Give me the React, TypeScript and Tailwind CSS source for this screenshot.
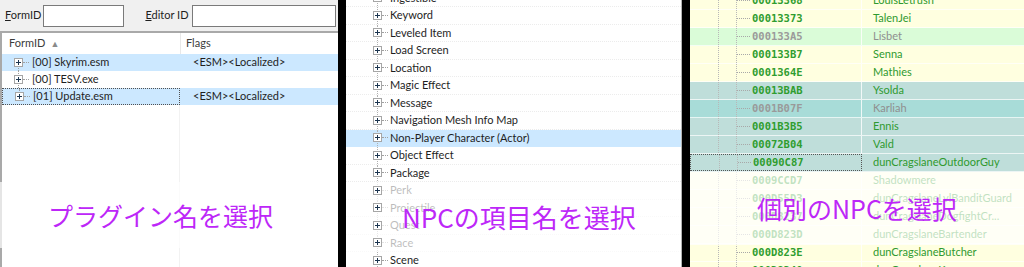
import React from "react";

// Windows-like tree expander box
function Expander() {
  return (
    <svg width="9" height="9" viewBox="0 0 9 9" className="relative z-10 shrink-0">
      <rect x="0.5" y="0.5" width="8" height="8" fill="white" stroke="#a6a6a6" />
      <path d="M2 4.5h5M4.5 2v5" stroke="#1c3550" />
    </svg>
  );
}

const pluginRows = [
  { name: "[00] Skyrim.esm", flags: "<ESM><Localized>", selected: true },
  { name: "[00] TESV.exe", flags: "" },
  { name: "[01] Update.esm", flags: "<ESM><Localized>", selected: true, focus: true },
];

const recordTypes = [
  "Ingestible",
  "Keyword",
  "Leveled Item",
  "Load Screen",
  "Location",
  "Magic Effect",
  "Message",
  "Navigation Mesh Info Map",
  "Non-Player Character (Actor)",
  "Object Effect",
  "Package",
  "Perk",
  "Projectile",
  "Quest",
  "Race",
  "Scene",
];

type Npc = { id: string; name: string; bg: string; gray?: boolean; focus?: boolean };

const npcs: Npc[] = [
  { id: "00013368", name: "LouisLetrush", bg: "bg-[#ffffe0]" },
  { id: "00013373", name: "TalenJei", bg: "bg-[#ffffe0]" },
  { id: "000133A5", name: "Lisbet", bg: "bg-[#dafcd8]", gray: true },
  { id: "000133B7", name: "Senna", bg: "bg-[#ffffe0]" },
  { id: "0001364E", name: "Mathies", bg: "bg-[#ffffe0]" },
  { id: "00013BAB", name: "Ysolda", bg: "bg-[#bfdeda]" },
  { id: "0001B07F", name: "Karliah", bg: "bg-[#a8dcd8]", gray: true },
  { id: "0001B3B5", name: "Ennis", bg: "bg-[#bfdeda]" },
  { id: "00072B04", name: "Vald", bg: "bg-[#bfdeda]" },
  { id: "00090C87", name: "dunCragslaneOutdoorGuy", bg: "bg-[#bfdeda]", focus: true },
  { id: "0009CCD7", name: "Shadowmere", bg: "bg-[#ffffe0]" },
  { id: "000D55D3", name: "dunCragslaneLvlBanditGuard", bg: "bg-[#ffffe0]" },
  { id: "000D8237", name: "dunCragslaneDogfightCr...", bg: "bg-[#ffffe0]" },
  { id: "000D823D", name: "dunCragslaneBartender", bg: "bg-[#ffffe0]" },
  { id: "000D823E", name: "dunCragslaneButcher", bg: "bg-[#ffffe0]" },
  { id: "000D8240", name: "dunCragslaneKeeper", bg: "bg-[#ffffe0]" },
];

function PluginPanel() {
  return (
    <div className="relative flex h-full w-[338px] shrink-0 flex-col overflow-hidden bg-white text-[11px] text-[#1e1e1e]">
      {/* filter bar */}
      <div className="flex h-[31px] shrink-0 items-center bg-[#f0f0f0] pl-[5px] text-[#1e1e1e]">
        <span>
          <span className="underline">F</span>ormID
        </span>
        <div className="ml-[2px] h-[22px] w-[81px] border border-[#7a7a7a] bg-white" />
        <span className="ml-[21px]">
          <span className="underline">E</span>ditor ID
        </span>
        <div className="ml-[3px] h-[22px] flex-1 border border-[#7a7a7a] bg-white" />
        <div className="w-[2px]" />
      </div>

      {/* list */}
      <div className="flex flex-1 flex-col border-l-2 border-t-2 border-[#a9a9a9]">
        <div className="flex h-[21px] shrink-0 items-center text-[#3c3c3c]">
          <div className="flex h-full w-[178px] items-center pl-[7px]">
            FormID
            <span className="ml-[5px] text-[9px] text-[#8a8a8a]">▲</span>
          </div>
          <div className="flex h-full flex-1 items-center border-l border-[#e8e8e8] pl-[5px]">Flags</div>
        </div>

        {pluginRows.map((row, i) => (
          <div key={row.name} className={`flex h-[17px] shrink-0 items-center ${row.selected ? "bg-[#cce8ff]" : ""}`}>
            <div
              className={`relative flex h-full w-[178px] items-center pl-[12px] ${
                row.focus ? "border border-dotted border-[#505050]" : ""
              }`}
            >
              <div
                className={`absolute left-[16px] border-l border-dotted border-[#a0a0a0] ${
                  i === 0 ? "top-1/2 bottom-0" : i === pluginRows.length - 1 ? "top-0 bottom-1/2" : "inset-y-0"
                }`}
              />
              <Expander />
              <div className="w-[6px] border-t border-dotted border-[#a0a0a0]" />
              <span className="ml-[3px]">{row.name}</span>
            </div>
            <div className="pl-[13px]">{row.flags}</div>
          </div>
        ))}

        <div className="flex flex-1">
          <div className="w-[178px] border-r border-[#f2f2f2]" />
        </div>
      </div>

      <div className="absolute inset-x-0 top-[182px] flex h-[66px] items-center bg-white/70 pl-[48px]">
        <span className="font-['Noto_Sans_CJK_JP',sans-serif] text-[25px] leading-none text-[#bd27f8]">
          プラグイン名を選択
        </span>
      </div>
    </div>
  );
}

function RecordPanel() {
  return (
    <div className="relative h-full w-[336px] shrink-0 overflow-hidden border-r border-[#b4b4b4] bg-white text-[11px] text-[#1e1e1e]">
      <div className="-mt-[10.5px] flex flex-col">
        {recordTypes.map((name) => (
          <div
            key={name}
            className={`flex h-[17.5px] shrink-0 items-center border-b border-dotted ${
              name.startsWith("Non-Player") ? "border-[#cce8ff] bg-[#cce8ff]" : "border-[#ececec]"
            }`}
          >
            <div className="relative flex h-full items-center pl-[27px]">
              <div className="absolute inset-y-0 left-[31px] border-l border-dotted border-[#b0b0b0]" />
              <Expander />
              <div className="w-[6px] border-t border-dotted border-[#a0a0a0]" />
              <span className="ml-[2px]">{name}</span>
            </div>
          </div>
        ))}
      </div>

      <div className="absolute inset-x-0 top-[182px] flex h-[70px] items-center bg-white/70 pl-[56px]">
        <span className="font-['Noto_Sans_CJK_JP',sans-serif] text-[26px] leading-none text-[#bd27f8]">
          NPCの項目名を選択
        </span>
      </div>
    </div>
  );
}

function NpcPanel() {
  return (
    <div className="relative h-full flex-1 overflow-hidden bg-[#ffffe0] text-[11px]">
      <div className="-mt-[8px] flex flex-col">
        {npcs.map((n) => (
          <div key={n.id} className={`flex h-[18px] shrink-0 border-b border-white/70 ${n.bg}`}>
            <div
              className={`flex h-full w-[172px] shrink-0 items-center ${
                n.focus ? "border border-dotted border-[#555]" : "border-r border-white/80"
              }`}
            >
              <div className="h-full w-[29px] border-r border-dotted border-[#b8b8b8]" />
              <div className="h-full w-[17px]" />
              <div className="h-full w-0 border-l border-dotted border-[#b8b8b8]" />
              <div className="w-[13px] border-t border-dotted border-[#a8a8a8]" />
              <span
                className={`ml-[2px] font-['DejaVu_Sans_Mono',monospace] text-[10.5px] font-semibold ${
                  n.gray ? "text-[#9a9a9a]" : "text-[#2f9d2f]"
                }`}
              >
                {n.id}
              </span>
            </div>
            <div className={`flex items-center pl-[11px] ${n.gray ? "text-[#8f8f8f]" : "text-[#2f9a2f]"}`}>
              {n.name}
            </div>
          </div>
        ))}
      </div>

      <div className="absolute inset-x-0 top-[172px] flex h-[73px] items-center bg-white/70 pl-[67px]">
        <span className="font-['Noto_Sans_CJK_JP',sans-serif] text-[25px] leading-none text-[#bd27f8]">
          個別のNPCを選択
        </span>
      </div>
    </div>
  );
}

export default function App() {
  return (
    <div className="flex h-[267px] w-[1024px] gap-[8px] overflow-hidden bg-black font-['Lato','Liberation_Sans',sans-serif]">
      <PluginPanel />
      <RecordPanel />
      <NpcPanel />
    </div>
  );
}
